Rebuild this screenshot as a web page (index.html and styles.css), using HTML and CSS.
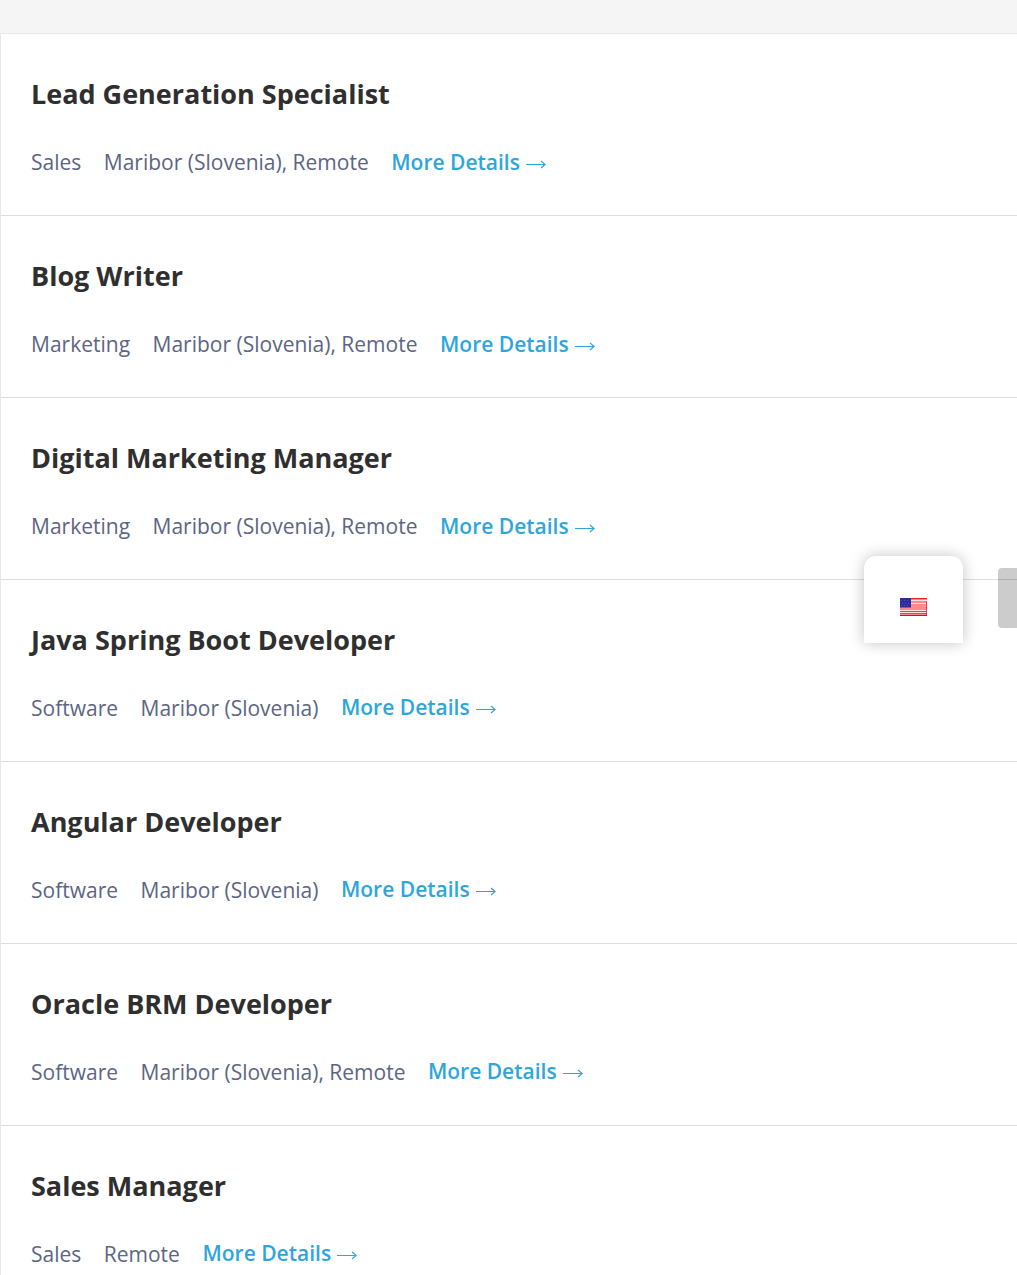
FILE: index.html
```html
<!DOCTYPE html>
<html lang="en">
<head>
<meta charset="utf-8">
<title>Open Positions</title>
<link rel="stylesheet" href="styles.css">
</head>
<body>
<main class="jobs">
<article class="job"><h2 class="title">Lead Generation Specialist</h2><div class="meta"><span>Sales</span><span>Maribor (Slovenia), Remote</span><a class="more">More Details <svg class="arrow" viewBox="0 0 20 12"><path d="M0 6.5H19M15 3L19.2 6.5L15 10"/></svg></a></div></article>
<article class="job"><h2 class="title">Blog Writer</h2><div class="meta"><span>Marketing</span><span>Maribor (Slovenia), Remote</span><a class="more">More Details <svg class="arrow" viewBox="0 0 20 12"><path d="M0 6.5H19M15 3L19.2 6.5L15 10"/></svg></a></div></article>
<article class="job"><h2 class="title">Digital Marketing Manager</h2><div class="meta"><span>Marketing</span><span>Maribor (Slovenia), Remote</span><a class="more">More Details <svg class="arrow" viewBox="0 0 20 12"><path d="M0 6.5H19M15 3L19.2 6.5L15 10"/></svg></a></div></article>
<article class="job"><h2 class="title">Java Spring Boot Developer</h2><div class="meta"><span>Software</span><span>Maribor (Slovenia)</span><a class="more raised">More Details <svg class="arrow" viewBox="0 0 20 12"><path d="M0 6.5H19M15 3L19.2 6.5L15 10"/></svg></a></div></article>
<article class="job"><h2 class="title">Angular Developer</h2><div class="meta"><span>Software</span><span>Maribor (Slovenia)</span><a class="more raised">More Details <svg class="arrow" viewBox="0 0 20 12"><path d="M0 6.5H19M15 3L19.2 6.5L15 10"/></svg></a></div></article>
<article class="job"><h2 class="title">Oracle BRM Developer</h2><div class="meta"><span>Software</span><span>Maribor (Slovenia), Remote</span><a class="more raised">More Details <svg class="arrow" viewBox="0 0 20 12"><path d="M0 6.5H19M15 3L19.2 6.5L15 10"/></svg></a></div></article>
<article class="job"><h2 class="title">Sales Manager</h2><div class="meta"><span>Sales</span><span>Remote</span><a class="more raised">More Details <svg class="arrow" viewBox="0 0 20 12"><path d="M0 6.5H19M15 3L19.2 6.5L15 10"/></svg></a></div></article>
</main>
<div class="language">
<svg class="flag" viewBox="0 0 27 18"><path fill="#ff8a8a" d="M0 0h27v18H0z"/><path fill="#f91c1c" d="M0 0h27v1H0z"/><path stroke="#ffe0e0" d="M0 2.5h27M0 5.5h27M0 12.5h27M0 14.5h27"/><path stroke="#e04545" d="M0 13.5h27M0 15.5h27M26.5 3v14"/><path fill="#b41c20" d="M0 17h27v1H0z"/><path fill="#2c2c9c" d="M0 0h11v9.5H0z"/><path stroke="#5050b4" stroke-dasharray="1 2" d="M1 2.5h9M2 5.5h8M1 7.5h9"/></svg>
</div>
<div class="scroll-thumb"></div>
</body>
</html>
```
FILE: styles.css
```css
* { box-sizing: border-box; }
body {
  margin: 0;
  height: 1275px;
  overflow: hidden;
  padding-top: 33px;
  background: #f5f5f5;
  font-family: "Open Sans", sans-serif;
}
.jobs {
  background: #fff;
  border-left: 1px solid #e9e9e9;
  border-top: 1px solid #e9e9e9;
}
.job {
  height: 182px;
  padding: 42px 30px 0;
  border-bottom: 1px solid #ddd;
}
.title {
  margin: 0;
  font-size: 27px;
  line-height: 36px;
  font-weight: 700;
  color: #2f2f2f;
}
.meta {
  display: flex;
  gap: 22.5px;
  margin-top: 32px;
  font-size: 21px;
  line-height: 36px;
  color: #5d6583;
  white-space: nowrap;
}
.more { color: #2ea6db; font-weight: 600; }
.raised { margin-top: -1px; }
.arrow {
  width: 20px;
  height: 12px;
  margin-left: 0.8px;
  vertical-align: 0;
  fill: none;
  stroke: currentColor;
  stroke-width: 1.2;
}
.language {
  position: absolute;
  left: 864px;
  top: 556px;
  width: 99px;
  height: 87px;
  padding: 42px 36px;
  background: #fff;
  border-radius: 12px 12px 0 0;
  box-shadow: 0 0 15px rgba(0, 0, 0, 0.24);
}
.flag { display: block; width: 27px; height: 18px; }
.scroll-thumb {
  position: absolute;
  left: 998px;
  top: 568px;
  width: 19px;
  height: 60px;
  background: rgba(0, 0, 0, 0.2);
  border-radius: 4px 0 0 4px;
}
```
